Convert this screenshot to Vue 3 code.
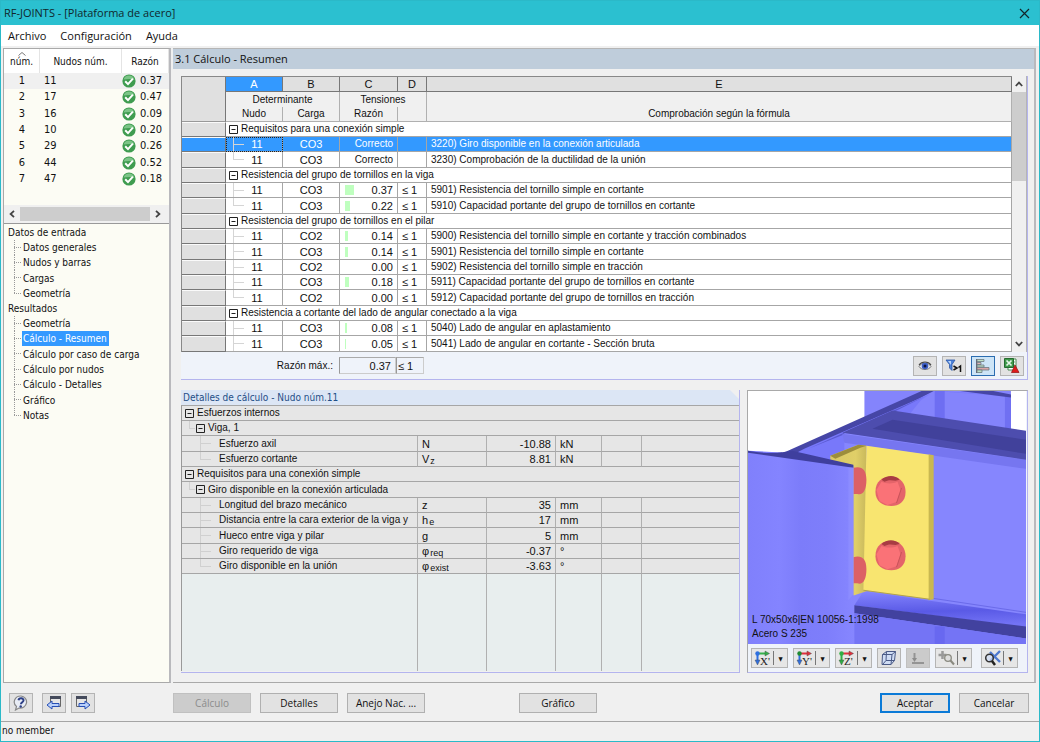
<script setup>
import { ref } from 'vue'

const nodes = [
  [1, 11, '0.37'], [2, 17, '0.47'], [3, 16, '0.09'], [4, 10, '0.20'],
  [5, 29, '0.26'], [6, 44, '0.52'], [7, 47, '0.18'],
]

const tree = [
  { title: 'Datos de entrada', items: ['Datos generales', 'Nudos y barras', 'Cargas', 'Geometría'] },
  {
    title: 'Resultados',
    items: ['Geometría', 'Cálculo - Resumen', 'Cálculo por caso de carga', 'Cálculo por nudos', 'Cálculo - Detalles', 'Gráfico', 'Notas'],
  },
]
const current = ref('Cálculo - Resumen')

const rows = [
  { group: 'Requisitos para una conexión simple' },
  { n: 11, c: 'CO3', r: 'Correcto', t: '3220) Giro disponible en la conexión articulada', sel: true },
  { n: 11, c: 'CO3', r: 'Correcto', t: '3230) Comprobación de la ductilidad de la unión', last: true },
  { group: 'Resistencia del grupo de tornillos en la viga' },
  { n: 11, c: 'CO3', r: '0.37', bar: 9, t: '5901) Resistencia del tornillo simple en cortante' },
  { n: 11, c: 'CO3', r: '0.22', bar: 5, t: '5910) Capacidad portante del grupo de tornillos en cortante', last: true },
  { group: 'Resistencia del grupo de tornillos en el pilar' },
  { n: 11, c: 'CO2', r: '0.14', bar: 3, t: '5900) Resistencia del tornillo simple en cortante y tracción combinados' },
  { n: 11, c: 'CO3', r: '0.14', bar: 3, t: '5901) Resistencia del tornillo simple en cortante' },
  { n: 11, c: 'CO2', r: '0.00', bar: 0, t: '5902) Resistencia del tornillo simple en tracción' },
  { n: 11, c: 'CO3', r: '0.18', bar: 4, t: '5911) Capacidad portante del grupo de tornillos en cortante' },
  { n: 11, c: 'CO2', r: '0.00', bar: 0, t: '5912) Capacidad portante del grupo de tornillos en tracción', last: true },
  { group: 'Resistencia a cortante del lado de angular conectado a la viga' },
  { n: 11, c: 'CO3', r: '0.08', bar: 2, t: '5040) Lado de angular en aplastamiento' },
  { n: 11, c: 'CO3', r: '0.05', bar: 1, t: '5041) Lado de angular en cortante - Sección bruta' },
]

const details = [
  { level: 0, label: 'Esfuerzos internos' },
  { level: 1, label: 'Viga, 1' },
  { label: 'Esfuerzo axil', s: 'N', v: '-10.88', u: 'kN' },
  { label: 'Esfuerzo cortante', s: 'V', sub: 'z', v: '8.81', u: 'kN', last: true },
  { level: 0, label: 'Requisitos para una conexión simple' },
  { level: 1, label: 'Giro disponible en la conexión articulada' },
  { label: 'Longitud del brazo mecánico', s: 'z', v: '35', u: 'mm' },
  { label: 'Distancia entre la cara exterior de la viga y', s: 'h', sub: 'e', v: '17', u: 'mm' },
  { label: 'Hueco entre viga y pilar', s: 'g', v: '5', u: 'mm' },
  { label: 'Giro requerido de viga', s: 'φ', sub: 'req', v: '-0.37', u: '°' },
  { label: 'Giro disponible en la unión', s: 'φ', sub: 'exist', v: '-3.63', u: '°', last: true },
]

const axes = [
  { k: 'X', h: '#35b24a', v: '#2f6fe0', l: "X'" },
  { k: 'Y', h: '#e0303c', v: '#2f6fe0', l: "Y'" },
  { k: 'Z', h: '#e0303c', v: '#2fae45', l: "Z'" },
]
</script>

<template>
  <div class="window">
    <header class="titlebar">
      <span>RF-JOINTS - [Plataforma de acero]</span>
      <button class="close" aria-label="Cerrar">
        <svg width="11" height="11" viewBox="0 0 11 11"><path d="M1 1l9 9M10 1l-9 9" stroke="#12262b" stroke-width="1.2" /></svg>
      </button>
    </header>
    <nav class="menu">
      <button>Archivo</button><button>Configuración</button><button>Ayuda</button>
    </nav>

    <main class="body">
      <aside class="side">
        <div class="list">
          <table class="nodes">
            <colgroup><col class="n1" /><col /><col class="n3" /></colgroup>
            <thead>
              <tr>
                <th><svg class="sort" width="8" height="4" viewBox="0 0 8 4"><path d="M.5 3.5L4 .5l3.5 3" fill="none" stroke="#777" /></svg>núm.</th>
                <th>Nudos núm.</th>
                <th>Razón</th>
              </tr>
            </thead>
            <tbody>
              <tr v-for="n in nodes" :key="n[0]">
                <td>{{ n[0] }}</td>
                <td>{{ n[1] }}</td>
                <td>
                  <span class="ratio">
                    <svg width="14" height="14" viewBox="0 0 14 14">
                      <circle cx="7" cy="7" r="6.6" fill="#3f9c50" />
                      <path d="M1.6 5.5a5.6 5.6 0 0 1 10.8 0C9 4.6 5 5 1.6 5.5z" fill="#7cc487" />
                      <path d="M3.2 7.2l2.8 2.9 4.9-5.4" fill="none" stroke="#fff" stroke-width="2" />
                    </svg>{{ n[2] }}
                  </span>
                </td>
              </tr>
            </tbody>
          </table>
          <div class="hscroll">
            <button aria-label="Desplazar a la izquierda"><svg width="6" height="8" viewBox="0 0 6 8"><path d="M5 .8L1.6 4 5 7.2" fill="none" stroke="#444" stroke-width="1.8" /></svg></button>
            <span class="thumb"></span>
            <button aria-label="Desplazar a la derecha"><svg width="6" height="8" viewBox="0 0 6 8"><path d="M1 .8L4.400 4 1 7.2" fill="none" stroke="#444" stroke-width="1.800" /></svg></button>
          </div>
        </div>
        <div class="tree">
          <section v-for="g in tree" :key="g.title">
            <h3>{{ g.title }}</h3>
            <ul>
              <li v-for="i in g.items" :key="i">
                <button :class="{ on: i === current }" @click="current = i">{{ i }}</button>
              </li>
            </ul>
          </section>
        </div>
      </aside>

      <section class="content">
        <h2>3.1 Cálculo - Resumen</h2>
        <div class="panels">
          <div class="summary">
            <div class="sheet">
              <table class="grid">
                <colgroup>
                  <col class="c0" /><col class="cA" /><col class="cB" /><col class="cC" /><col class="cD" /><col />
                </colgroup>
                <thead>
                  <tr class="letters">
                    <th rowspan="3" class="corner"></th>
                    <th class="act">A</th><th>B</th><th>C</th><th>D</th><th>E</th>
                  </tr>
                  <tr class="heads">
                    <th colspan="2">Determinante</th><th colspan="2">Tensiones</th><th></th>
                  </tr>
                  <tr class="heads low">
                    <th>Nudo</th><th>Carga</th><th>Razón</th><th></th><th>Comprobación según la fórmula</th>
                  </tr>
                </thead>
                <tbody>
                  <tr v-for="(r, i) in rows" :key="i" :class="{ sel: r.sel }">
                    <th class="rh"></th>
                    <td v-if="r.group" colspan="5" class="group">
                      <span class="gl">
                        <button class="tog" aria-label="Contraer"><svg width="9" height="9" viewBox="0 0 9 9"><path d="M.5.5h8v8h-8zM2.500 4.500h4" fill="none" stroke="#222" /></svg></button>{{ r.group }}
                      </span>
                    </td>
                    <template v-else>
                      <td class="ctr branch" :class="{ last: r.last }">{{ r.n }}</td>
                      <td class="ctr">{{ r.c }}</td>
                      <td>
                        <span class="val" :class="{ word: r.bar === undefined }"><i v-if="r.bar" :style="{ width: r.bar + 'px' }"></i><span>{{ r.r }}</span></span>
                      </td>
                      <td class="lim">{{ r.bar === undefined ? '' : '≤ 1' }}</td>
                      <td class="desc">{{ r.t }}</td>
                    </template>
                  </tr>
                </tbody>
              </table>
              <div class="vscroll">
                <button aria-label="Desplazar arriba"><svg width="8" height="6" viewBox="0 0 8 6"><path d="M.8 5L4 1.600 7.200 5" fill="none" stroke="#444" stroke-width="1.800" /></svg></button>
                <span class="thumb"></span>
                <button class="down" aria-label="Desplazar abajo"><svg width="8" height="6" viewBox="0 0 8 6"><path d="M.8 1L4 4.400 7.200 1" fill="none" stroke="#444" stroke-width="1.800" /></svg></button>
              </div>
            </div>
            <div class="sumbar">
              <span class="mlabel">Razón máx.:</span>
              <output class="mval">0.37</output>
              <output class="mlim">≤ 1</output>
              <div class="tools">
                <button class="ib" aria-label="Ver">
                  <svg width="14" height="10" viewBox="0 0 14 10">
                    <path d="M1 5.500C3.500 1 10.500 1 13 5.500 10.500 9.500 3.500 9.500 1 5.500z" fill="#e4e8f2" stroke="#777" stroke-width="1" />
                    <circle cx="7" cy="5" r="3.300" fill="#3c5fc6" /><circle cx="7" cy="5" r="1.500" fill="#0d1440" /><path d="M1 4C4 0 10 0 13 4" fill="none" stroke="#444" stroke-width="1.200" />
                  </svg>
                </button>
                <button class="ib" aria-label="Filtrar mayores que 1">
                  <svg width="18" height="14" viewBox="0 0 18 14">
                    <path d="M1 1h9L7 5.500v6L4.500 9V5.500z" fill="#4d84dc" stroke="#2c55a4" stroke-width=".8" /><path d="M3 2h3v4z" fill="#b9d4fb" />
                    <path d="M8.500 7l3.500 2-3.500 2M13.500 8.500l2-1.500v6" fill="none" stroke="#111" stroke-width="1.500" />
                  </svg>
                </button>
                <button class="ib pressed" aria-label="Barras de color">
                  <svg width="18" height="16" viewBox="0 0 18 16">
                    <path d="M2.500 1v14" stroke="#667" />
                    <g stroke="#6b7a80" stroke-width=".8"><path d="M3 1.500h7v2H3z" fill="#bfe0c4" /><path d="M3 4.500h4v2H3z" fill="#e3b6b6" /><path d="M3 7h7v2H3z" fill="#bfe0c4" /><path d="M3 9.500h12v2.500H3z" fill="#d9a5a5" /><path d="M3 12h5v2.500H3z" fill="#bfe0c4" /></g>
                  </svg>
                </button>
                <button class="ib" aria-label="Exportar a Excel">
                  <svg width="18" height="17" viewBox="0 0 18 17">
                    <path d="M5 2h8v11H5z" fill="#fff" stroke="#4d8a54" /><path d="M9 5h3M9 8h3" stroke="#6ea777" />
                    <path d="M1.500 1.500h9v9h-9z" fill="#3f9a4b" stroke="#246b30" /><path d="M3.500 3.500l5 5M8.500 3.500l-5 5" stroke="#e6f5e8" stroke-width="1.700" />
                    <path d="M12 8l4 7.500H8.500z" fill="#e01b1b" stroke="#8f1010" stroke-width=".7" />
                  </svg>
                </button>
              </div>
            </div>
          </div>

          <div class="lower">
            <div class="details">
              <h4>Detalles de cálculo - Nudo núm.11</h4>
              <table class="dt">
                <colgroup><col class="d1" /><col class="d2" /><col class="d2" /><col class="d4" /><col class="d5" /><col /></colgroup>
                <tbody>
                  <tr v-for="(d, i) in details" :key="i">
                    <td v-if="d.level !== undefined" colspan="6" :class="'lv' + d.level">
                      <span class="gl">
                        <button class="tog" aria-label="Contraer"><svg width="9" height="9" viewBox="0 0 9 9"><path d="M.5.5h8v8h-8zM2.500 4.500h4" fill="none" stroke="#222" /></svg></button>{{ d.label }}
                      </span>
                    </td>
                    <template v-else>
                      <td class="name branch" :class="{ last: d.last }">{{ d.label }}</td>
                      <td class="sym"><span class="symbol">{{ d.s }}<small v-if="d.sub">{{ d.sub }}</small></span></td>
                      <td class="num">{{ d.v }}</td>
                      <td class="unit">{{ d.u }}</td>
                      <td></td><td></td>
                    </template>
                  </tr>
                  <tr class="fill"><td></td><td></td><td></td><td></td><td></td><td></td></tr>
                </tbody>
              </table>
            </div>

            <div class="view">
              <div class="scene">
                <svg viewBox="0 0 277 253" preserveAspectRatio="xMidYMid slice">
                  <defs>
                    <linearGradient id="col" x1="0" x2="1"><stop offset="0" stop-color="#8080fc" /><stop offset=".3" stop-color="#8484ff" /><stop offset=".5" stop-color="#7c7cfa" /><stop offset=".75" stop-color="#7e7efb" /><stop offset="1" stop-color="#8686ff" /></linearGradient>
                    <linearGradient id="flg" x1="0" x2="0.12" y1="0" y2="1"><stop offset="0" stop-color="#8585fe" /><stop offset=".6" stop-color="#5a5ae6" /><stop offset="1" stop-color="#7373f5" /></linearGradient>
                    <linearGradient id="yl" x1="0" x2="1"><stop offset="0" stop-color="#d8c866" /><stop offset=".7" stop-color="#e0cf68" /><stop offset="1" stop-color="#c9b95c" /></linearGradient>
                  </defs>
                  <rect width="277" height="253" fill="#fff" />
                  <path d="M116 0H262V60H116z" fill="#8484fc" />
                  <path d="M38 62L182 0l80 5v40l15 4v204H0V60z" fill="#7878fa" />
                  <path d="M180 0L262 6V45H140z" fill="#8484fc" />
                  <path d="M186 0h10v32h-10z" fill="#6e6ef2" />
                  <path d="M256 5h6v36h-6z" fill="#7070f2" />
                  <path d="M208 0h34l20 4v3l-8-1z" fill="#4646a6" />
                  <path d="M174 0L42 59c-6 3-10 3-12 3l20 8 10-6L186 0z" fill="#4646a6" />
                  <path d="M182 3L56 58c-13 6-14 12-4 14l60 8 20-20 40-50z" fill="#7878fa" />
                  <path d="M176 6L60 58l60-24z" fill="#5a5ad0" />
                  <path d="M96 42L277 68V253H96z" fill="#8686fe" />
                  <path d="M94 43L277 69V78L96 52z" fill="#7676f0" />
                  <path d="M144 20L277 40V69L94 42z" fill="#4d4dae" />
                  <path d="M144 29L277 49V63L124 38z" fill="#41419b" />
                  <path d="M115 200L277 223V236L106 214z" fill="url(#flg)" />
                  <path d="M184 207L277 221" stroke="#5e5ee0" stroke-width=".7" />
                  <path d="M106 214L277 235V247L106 222z" fill="#42429f" />
                  <path d="M106 222L277 247V253H106z" fill="#7474f5" />
                  <path d="M186 235h10v18h-10z" fill="#6868f0" />
                  <path d="M82 65L110 54l8 1v145l-12 4H82z" fill="url(#yl)" />
                  <path d="M82 65L110 54l8 1-6 2-25 11z" fill="#9c8d3c" />
                  <path d="M118 55L181 64V208L115 199z" fill="#f8e570" />
                  <path d="M180 63.500l5 1V208l-5 1z" fill="#c9b851" />
                  <path d="M115 199L181 208" stroke="#b3a34a" />
                  <g fill="#dc6065"><path d="M105 77c8-2 13 1 13 12s-4 16-9 14h-4zM105 166c8-2 13 1 13 12s-4 16-9 14h-4z" /></g>
                  <g v-for="y in [0, 64]" :key="y">
                    <path :d="`M127 ${101 + y}c0-11 7-15 16-15 10 0 14 8 14 15 0 10-7 14-14 14-9 0-16-5-16-14z`" fill="#e4646a" />
                    <path :d="`M128 ${99 + y}l5-8c5 2 11 2 16 0l3 8-4 12-9 3-8-4z`" fill="#fa7277" />
                    <path :d="`M133 ${89 + y}c5-5 14-5 18 0l-4 1c-4-1-8-1-11 1z`" fill="#a83c43" />
                    <path :d="`M153 ${97 + y}l-5 15`" stroke="#c04d54" stroke-width=".8" />
                  </g>
                  <path d="M0 61L105 75V253H0z" fill="url(#col)" />
                  <path d="M0 60c16 3 32 3 44 0l61 14v3L0 62z" fill="#3f3f9e" />
                  <path d="M100 77h5v126l-5 6z" fill="#8c8cff" />
                </svg>
                <p>L 70x50x6|EN 10056-1:1998<br />Acero S 235</p>
              </div>
              <div class="vbar">
                <div v-for="a in axes" :key="a.k" class="split">
                  <button :aria-label="'Vista ' + a.k">
                    <svg width="18" height="16" viewBox="0 0 18 16">
                      <path d="M3.500 3.500h8" :stroke="a.h" stroke-width="2" /><path d="M11 1l4.500 2.500L11 6z" :fill="a.h" stroke="#444" stroke-width=".4" />
                      <path d="M3.500 3.500v7" :stroke="a.v" stroke-width="2" /><path d="M1 10h5l-2.500 5z" :fill="a.v" stroke="#444" stroke-width=".4" />
                      <circle cx="3.500" cy="3.500" r="2.200" :fill="a.k === 'Y' ? '#1f8a32' : a.v" />
                      <text x="6" y="15" font-family="Liberation Serif, serif" font-size="11" fill="#222">{{ a.l }}</text>
                    </svg>
                  </button>
                  <button class="arr" :aria-label="'Opciones ' + a.k">▼</button>
                </div>
                <button class="ib cube" aria-label="Isométrica">
                  <svg width="16" height="16" viewBox="0 0 16 16"><path d="M1.500 4.500l4-3h9l-1 9-3.500 4h-9z" fill="#cfdcf4" stroke="#4a5a86" /><path d="M1.500 4.500h9.500l3.500-3M11 4.500l-1 10M5.500 1.500l-.5 9-3.500 4M5 10.500h8.500" fill="none" stroke="#4a5a86" /></svg>
                </button>
                <button class="ib off" disabled aria-label="Cargas">
                  <svg width="16" height="16" viewBox="0 0 16 16"><path d="M2 13h12" stroke="#949494" stroke-width="2" /><path d="M4.500 3v6" stroke="#949494" stroke-width="2" /><path d="M2 8h5l-2.500 4z" fill="#8c8c8c" /></svg>
                </button>
                <div class="split">
                  <button aria-label="Acercar">
                    <svg width="18" height="16" viewBox="0 0 18 16"><path d="M4.500 1v8M.5 5h8" stroke="#999" stroke-width="2.500" /><circle cx="10" cy="8" r="3.300" fill="#ddd" stroke="#8a8a80" stroke-width="1.300" /><path d="M12.500 10.500l3.500 4" stroke="#8a8a80" stroke-width="2" /></svg>
                  </button>
                  <button class="arr" aria-label="Opciones de zoom">▼</button>
                </div>
                <div class="split wide">
                  <button aria-label="Restablecer zoom">
                    <svg width="18" height="16" viewBox="0 0 18 16"><path d="M6 2l10 10M16 1L6 11" stroke="#4d78cf" stroke-width="2.400" /><circle cx="5.500" cy="8" r="3.800" fill="#cfdcf4" fill-opacity=".7" stroke="#333" stroke-width="1.500" /><path d="M8 11l3 4" stroke="#222" stroke-width="2.500" /></svg>
                  </button>
                  <button class="arr" aria-label="Más opciones">▼</button>
                </div>
              </div>
            </div>
          </div>
        </div>
      </section>
    </main>

    <footer class="actions">
      <div class="left">
        <button class="ib help" aria-label="Ayuda">
          <svg width="16" height="16" viewBox="0 0 16 16"><path d="M8 1a6.500 6 0 1 1-2 12l-3.500 2 1-3.500A6.500 6 0 0 1 8 1z" fill="#e9edf5" stroke="#888" stroke-width="1.200" /><path d="M5.500 5.200c.5-2.600 5.300-2.400 5 .3-.2 1.800-2.500 1.800-2.600 3.700" fill="none" stroke="#2d3f86" stroke-width="2" /><circle cx="7.700" cy="11.500" r="1.200" fill="#2d3f86" /></svg>
        </button>
        <button class="ib" aria-label="Anterior">
          <svg width="16" height="16" viewBox="0 0 16 16"><path d="M4.500 1.500h10v10h-10z" fill="#e6e6e6" stroke="#666" /><path d="M4 1h11v3H4z" fill="#454b5c" /><path d="M1 10l5-4v2.500h7v3H6V14z" fill="#b9d0fb" stroke="#274fb5" /></svg>
        </button>
        <button class="ib" aria-label="Siguiente">
          <svg width="16" height="16" viewBox="0 0 16 16"><path d="M1.500 1.500h10v10h-10z" fill="#e6e6e6" stroke="#666" /><path d="M1 1h11v3H1z" fill="#454b5c" /><path d="M15 10l-5-4v2.500H4v3h6V14z" fill="#b9d0fb" stroke="#274fb5" /></svg>
        </button>
      </div>
      <button class="btn" disabled>Cálculo</button>
      <button class="btn">Detalles</button>
      <button class="btn">Anejo Nac. ...</button>
      <button class="btn graph">Gráfico</button>
      <span class="grow"></span>
      <button class="btn sm primary">Aceptar</button>
      <button class="btn sm">Cancelar</button>
    </footer>
    <div class="status">no member</div>
  </div>
</template>

<style>
body { background: #f0f0f0; }
</style>

<style scoped>
* { box-sizing: border-box; }
button { font: inherit; color: inherit; background: none; border: 0; padding: 0; margin: 0; }
h2, h3, h4, p, ul { margin: 0; padding: 0; font-weight: normal; list-style: none; }
svg { display: block; flex: none; }
table { border-collapse: separate; border-spacing: 0; table-layout: fixed; width: 100%; }
th, td { padding: 0; font-weight: normal; text-align: left; white-space: nowrap; overflow: hidden; }

.window {
  display: flex; flex-direction: column; min-height: 100vh;
  background: #f0f0f0; border: 1px solid #2bb9c8; color: #111;
  font: 10px/15px "DejaVu Sans Condensed", "DejaVu Sans", sans-serif;
}
.titlebar { display: flex; justify-content: space-between; align-items: center; height: 24px; padding: 0 9px 0 3px; background: #2bc0d0; font: 11px/24px "Open Sans", sans-serif; color: #10272c; }
.menu { display: flex; gap: 14px; height: 21px; padding: 0 7px; background: #fff; font: 11px/18px "Open Sans", sans-serif; }

.body { flex: 1; display: flex; gap: 2px; padding: 2px 3px 0 2px; }
.side { width: 168px; flex: none; display: flex; flex-direction: column; background: #fcfcf4; border: 1px solid #a9a9a9; border-right: 2px solid #b9b9bd; }
.list { display: flex; flex-direction: column; height: 175px; border-bottom: 1px solid #999; }
.nodes { flex: none; font-size: 11px; }
.n1 { width: 36px; } .n3 { width: 47px; }
.nodes th { height: 24px; background: #fff; text-align: center; line-height: 12px; vertical-align: bottom; padding-bottom: 5px; border-right: 1px solid #e4e4e4; font-size: 10px; }
.sort { margin: 0 auto; }
.nodes td { height: 16px; line-height: 16px; }
.nodes tr:nth-child(3n) td { height: 17px; }
.nodes tr:first-child td { background: #f0f0f0; }
.nodes td:first-child { text-align: center; }
.nodes td:nth-child(2) { padding-left: 4px; }
.ratio { display: flex; align-items: center; gap: 4px; height: 16px; }
.hscroll { display: flex; align-items: center; height: 18px; margin-top: auto; background: #f0f0f0; }
.hscroll button { width: 16px; display: flex; justify-content: center; }
.hscroll .thumb { width: 130px; height: 14px; background: #cdcdcd; }
.tree { padding: 1px 0 0 4px; }
.tree h3 { font-size: 10px; height: 15px; line-height: 15px; }
.tree li { display: flex; height: 15px; margin-left: 6px; padding-left: 8px; background:
  repeating-linear-gradient(#999 0 1px, transparent 1px 2px) 0 0 / 1px 100% no-repeat,
  repeating-linear-gradient(90deg, #999 0 1px, transparent 1px 2px) 0 7px / 7px 1px no-repeat; }
.tree li:nth-child(3n) { height: 16px; }
.tree li:last-child { background-size: 1px 8px, 7px 1px; }
.tree li button { padding: 0 2px 0 1px; line-height: 15px; }
.tree li .on { background: #3399ff; color: #fff; }

.content { flex: 1; min-width: 0; border-top: 1px solid #b5b5b5; border-right: 2px solid #b9b9bd; border-bottom: 1px solid #a9a9a9; }
.content h2 { height: 20px; padding-left: 2px; background: #bfcddb; font: 11px/19px "Open Sans", sans-serif; }
.panels { display: flex; flex-direction: column; gap: 10px; padding: 7px 6px 8px 8px; }

.summary { border-right: 1px solid #b4b4ee; border-bottom: 1px solid #b4b4ee; background: #eff3fa; }
.sheet { display: flex; }
.grid, .dt { font: 10px/14px "Liberation Sans", Arial, sans-serif; }
.grid { flex: 1; border-top: 1px solid #888; border-left: 1px solid #888; }
.c0 { width: 44px; } .cA, .cB { width: 57px; } .cC { width: 58px; } .cD { width: 29px; }
.grid tr, .dt tr { height: 15px; }
.grid tbody tr:nth-child(3n), .dt tr:nth-child(3n) { height: 16px; }
.letters th { background: #e0e0e0; text-align: center; font-size: 11px; line-height: 12px; border-right: 1px solid #777; border-bottom: 1px solid #777; }
.letters .act { background: #3399ff; color: #fff; }
.letters .corner { border-bottom-color: #999; }
.heads th { background: #f0f0f0; text-align: center; border-right: 1px solid #b0b0b0; }
.low th { border-bottom: 1px solid #b0b0b0; }
.rh { background: #e0e0e0; border-right: 1px solid #777; border-bottom: 1px solid #777; border-top: 1px solid #fafafa; }
.grid td { background: #fff; border-bottom: 1px solid #a6a6a6; border-right: 1px solid #a6a6a6; }
.gl { display: flex; align-items: center; gap: 3px; height: 14px; padding-left: 3px; }
.ctr { text-align: center; font-size: 11px; }
.grid td.ctr:nth-child(2) { padding-left: 6px; }
.grid .branch { background: linear-gradient(#d5d5d5, #d5d5d5) 7px 0 / 1px 100% no-repeat, linear-gradient(#d5d5d5, #d5d5d5) 7px 7px / 11px 1px no-repeat, #fff; }
.grid .branch.last { background-size: 1px 8px, 11px 1px; }
.val { display: flex; align-items: center; padding: 0 4px 0 5px; font-size: 11px; }
.word { font-size: 10px; }
.val i { height: 10px; background: #bfffbf; }
.val span { margin-left: auto; }
.lim, .desc { padding-left: 4px; }
.lim { font-size: 11px; }
.grid .sel td, .grid .sel .rh { background-color: #3399ff; color: #fff; }
.grid .sel .branch { outline: 1px dotted #222; outline-offset: -1px; }
.vscroll { width: 15px; flex: none; display: flex; flex-direction: column; background: #f0f0f0; border-right: 1px solid #b5b5b5; }
.vscroll button { height: 16px; display: flex; justify-content: center; align-items: center; }
.vscroll .thumb { height: 89px; background: #cdcdcd; }
.vscroll .down { margin-top: auto; }
.sumbar { display: flex; align-items: center; height: 27px; padding-right: 3px; font: 10px/14px "Liberation Sans", Arial, sans-serif; }
.mlabel { width: 152px; text-align: right; }
.mval, .mlim { height: 17px; font-size: 11px; border: 1px solid #ccc; border-left-color: #999; border-top-color: #aaa; }
.mval { width: 57px; margin-left: 6px; padding: 1px 4px 0 0; text-align: right; }
.mlim { width: 28px; padding: 1px 0 0 1px; }
.tools { display: flex; gap: 5px; margin-left: auto; }
.ib { width: 24px; height: 20px; display: flex; align-items: center; justify-content: center; background: #e2e2e2; border: 1px solid #b4b4b4; }
.pressed { background: #cce4f7; border-color: #2a6cb0; }

.lower { display: flex; gap: 7px; }
.details { flex: 2 1 0; min-width: 0; border-right: 1px solid #b4b4ee; border-bottom: 1px solid #b4b4ee; display: flex; flex-direction: column; }
.details h4 { height: 15px; padding-left: 2px; color: #1f4e86; background: #dce6f5; font: 10px/15px "DejaVu Sans Condensed", sans-serif; clip-path: polygon(0 0, calc(100% - 9px) 0, 100% 9px, 100% 100%, 0 100%); }
.dt { border-left: 1px solid #999; border-top: 1px solid #a6a6a6; }
.dt td { background: #e6e6e6; border-bottom: 1px solid #a6a6a6; border-right: 1px solid #b0b0b0; }
.dt td:last-child { border-right: 0; }
.d1 { width: 236px; } .d2 { width: 69px; } .d4 { width: 46px; } .d5 { width: 40px; }
.lv1 .gl { padding-left: 14px; }
.dt .lv1 { background: linear-gradient(#d0d0d0, #d0d0d0) 7px 0 / 1px 8px no-repeat, linear-gradient(#d0d0d0, #d0d0d0) 7px 7px / 6px 1px no-repeat, #e6e6e6; }
.dt .branch { background: linear-gradient(#d0d0d0, #d0d0d0) 18px 0 / 1px 100% no-repeat, linear-gradient(#d0d0d0, #d0d0d0) 18px 7px / 11px 1px no-repeat, #e6e6e6; padding-left: 37px; }
.dt .branch.last { background-size: 1px 8px, 11px 1px; }
.sym, .unit, .num { font-size: 11px; }
.sym, .unit { padding-left: 4px; }
.symbol { display: flex; gap: 1px; height: 14px; }
.symbol small { font-size: 9px; line-height: 10px; padding-top: 4px; }
.num { text-align: right; }
.dt td.num { padding-right: 4px; }
.dt .fill td { height: 97px; background: #e8eeee; border-bottom: 0; }

.view { flex: 1 1 0; min-width: 0; display: flex; flex-direction: column; border: 1px solid #b4b4ee; border-top-color: #a9a9a9; border-left-color: #a9a9a9; background: #eff3fa; }
.scene { position: relative; flex: 1; margin-right: 1px; }
.scene svg { width: 100%; height: 253px; }
.scene p { position: absolute; left: 4px; bottom: 3px; font: 10px/14px "Liberation Sans", Arial, sans-serif; color: #111; }
.vbar { display: flex; gap: 5px; height: 28px; padding: 4px 3px; }
.split { display: flex; width: 37px; height: 20px; border: 1px solid #b4b4b4; background: #e6e6e6; }
.split button { flex: 1; display: flex; align-items: center; justify-content: center; }
.split .arr { flex: none; width: 14px; margin: 2px 0; border-left: 1px solid #777; font-size: 6px; }
.wide { margin-left: 4px; }
.off { background: #cbcbcb; border-color: #c0c0c0; }

.actions { display: flex; align-items: center; gap: 9px; height: 38px; padding: 2px 10px 0 8px; }
.left { display: flex; gap: 5px; width: 155px; }
.help { margin-right: 4px; }
.btn { width: 78px; height: 20px; background: #e2e2e2; border: 1px solid #b0b0b0; font: 11px/18px "Open Sans", sans-serif; font-size: 10px; white-space: nowrap; text-align: center; }
.btn:disabled { background: #cccccc; border-color: #c0c0c0; color: #8b8b8b; }
.graph { margin-left: 85px; }
.grow { flex: 1; }
.sm { width: 70px; }
.primary { border: 2px solid #0b7ad7; line-height: 16px; }
.status { height: 20px; border-top: 1px solid #a5a5a5; padding: 1px 0 0 1px; line-height: 16px; }
</style>
